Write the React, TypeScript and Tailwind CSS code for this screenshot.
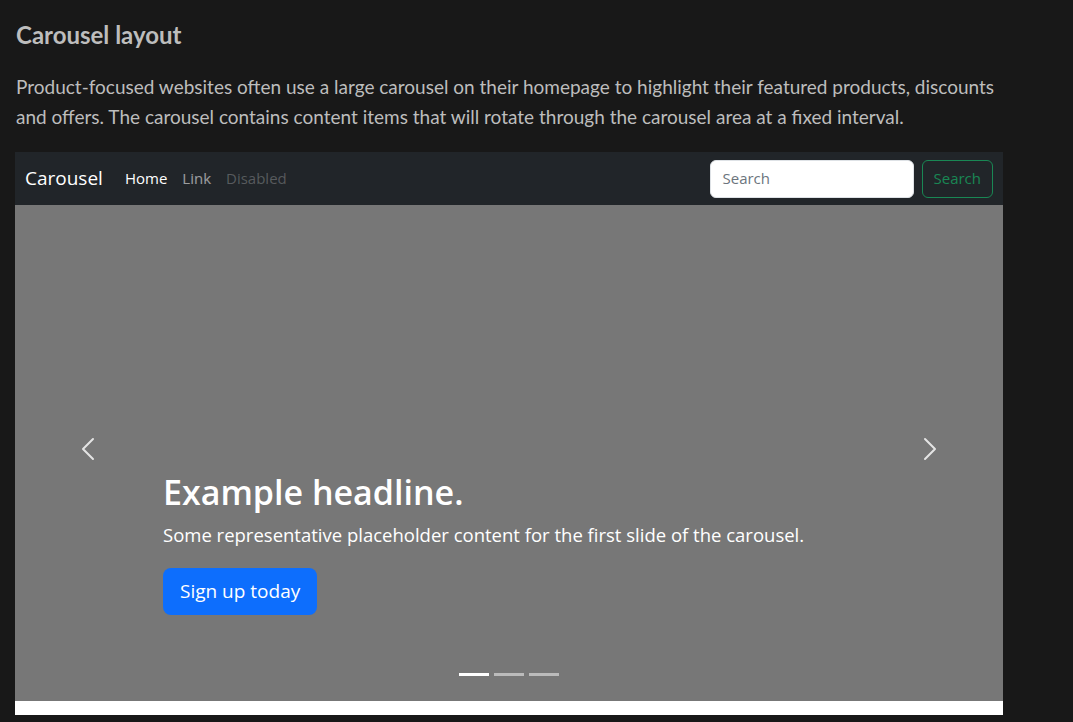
import { ChevronLeft, ChevronRight } from 'lucide-react'

export default function App() {
  return (
    <div className="min-h-screen bg-[#181818] px-[15px] pt-[20px] font-['Lato',sans-serif]">
      <h2 className="text-[24px] font-bold text-[#bdbdbd] leading-[30px] pl-[1px]">Carousel layout</h2>
      <p className="mt-[22px] text-[19px] leading-[30px] text-[#bdbdbd] max-w-[990px] pl-[1px]">
        Product-focused websites often use a large carousel on their homepage to highlight their featured products, discounts and offers. The carousel contains content items that will rotate through the carousel area at a fixed interval.
      </p>

      {/* preview frame */}
      <div className="mt-[20px] w-[988px] bg-white pb-[14px] font-['Open_Sans',sans-serif]">
        <nav className="h-[53px] bg-[#212529] flex items-center px-[10px]">
          <span className="text-[19px] text-white mr-[22px]">Carousel</span>
          <div className="flex items-center gap-[15px] text-[15px]">
            <span className="text-white">Home</span>
            <span className="text-white/55">Link</span>
            <span className="text-white/25">Disabled</span>
          </div>
          <div className="ml-auto flex items-center gap-[8px]">
            <div className="w-[204px] h-[38px] bg-white rounded-[6px] border border-[#dee2e6] flex items-center px-[12px] text-[15px] text-[#6c757d]">
              Search
            </div>
            <div className="h-[38px] px-[11px] rounded-[6px] border border-[#198754] text-[#198754] text-[15px] flex items-center">
              Search
            </div>
          </div>
        </nav>

        <div className="relative h-[496px] bg-[#777777]">
          <ChevronLeft className="absolute left-[53px] top-[224px] w-[40px] h-[40px] text-white/80" strokeWidth={1.2} />
          <ChevronRight className="absolute right-[53px] top-[224px] w-[40px] h-[40px] text-white/80" strokeWidth={1.2} />

          <div className="absolute left-[148px] top-[263px] text-white">
            <h1 className="text-[34px] font-semibold leading-[48px]">Example headline.</h1>
            <p className="text-[18.5px] leading-[30px] mt-[4px]">
              Some representative placeholder content for the first slide of the carousel.
            </p>
            <div className="mt-[18px] inline-flex items-center h-[47px] px-[17px] rounded-[8px] bg-[#0d6efd] text-[19px] text-white">
              Sign up today
            </div>
          </div>

          <div className="absolute bottom-[25px] left-0 right-0 flex justify-center gap-[5px]">
            <span className="w-[30px] h-[3px] bg-white" />
            <span className="w-[30px] h-[3px] bg-white/50" />
            <span className="w-[30px] h-[3px] bg-white/50" />
          </div>
        </div>
      </div>
    </div>
  )
}
